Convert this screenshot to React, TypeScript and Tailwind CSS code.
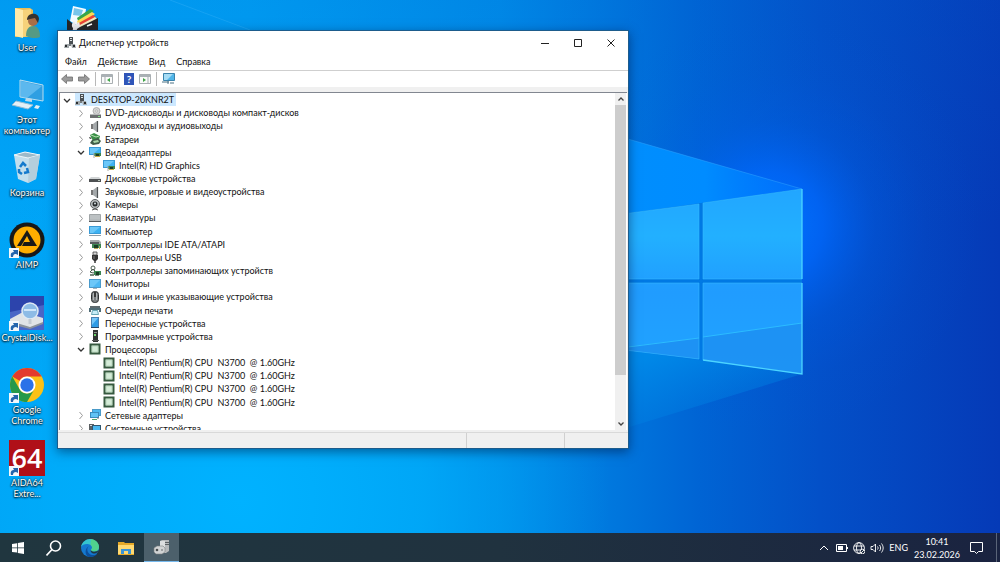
import { useState, type ReactNode } from 'react'

type Node = {
	label: string
	icon: string
	level: number
	open?: boolean
}

const nodes: Node[] = [
	{ label: 'DESKTOP-20KNR2T', icon: 'pc', level: 0, open: true },
	{ label: 'DVD-дисководы и дисководы компакт-дисков', icon: 'dvd', level: 1 },
	{ label: 'Аудиовходы и аудиовыходы', icon: 'audio', level: 1 },
	{ label: 'Батареи', icon: 'battery', level: 1 },
	{ label: 'Видеоадаптеры', icon: 'video', level: 1, open: true },
	{ label: 'Intel(R) HD Graphics', icon: 'video', level: 2 },
	{ label: 'Дисковые устройства', icon: 'disk', level: 1 },
	{ label: 'Звуковые, игровые и видеоустройства', icon: 'audio', level: 1 },
	{ label: 'Камеры', icon: 'camera', level: 1 },
	{ label: 'Клавиатуры', icon: 'keyboard', level: 1 },
	{ label: 'Компьютер', icon: 'computer', level: 1 },
	{ label: 'Контроллеры IDE ATA/ATAPI', icon: 'ide', level: 1 },
	{ label: 'Контроллеры USB', icon: 'usb', level: 1 },
	{ label: 'Контроллеры запоминающих устройств', icon: 'storage', level: 1 },
	{ label: 'Мониторы', icon: 'monitor', level: 1 },
	{ label: 'Мыши и иные указывающие устройства', icon: 'mouse', level: 1 },
	{ label: 'Очереди печати', icon: 'printer', level: 1 },
	{ label: 'Переносные устройства', icon: 'portable', level: 1 },
	{ label: 'Программные устройства', icon: 'software', level: 1 },
	{ label: 'Процессоры', icon: 'cpu', level: 1, open: true },
	{ label: 'Intel(R) Pentium(R) CPU  N3700  @ 1.60GHz', icon: 'cpu', level: 2 },
	{ label: 'Intel(R) Pentium(R) CPU  N3700  @ 1.60GHz', icon: 'cpu', level: 2 },
	{ label: 'Intel(R) Pentium(R) CPU  N3700  @ 1.60GHz', icon: 'cpu', level: 2 },
	{ label: 'Intel(R) Pentium(R) CPU  N3700  @ 1.60GHz', icon: 'cpu', level: 2 },
	{ label: 'Сетевые адаптеры', icon: 'network', level: 1 },
	{ label: 'Системные устройства', icon: 'system', level: 1 },
]

const indent = ['pl-[2px]', 'pl-[16px]', 'pl-[30px]']

const screen = (
	<>
		<rect x="0.5" y="1.5" width="11" height="7" fill="#3db2f2" stroke="#3a9ad5" />
		<path d="M1 2h10L4 8H1z" fill="#8bd6fb" opacity=".6" />
	</>
)

const glyphs: Record<string, ReactNode> = {
	pc: (
		<>
			<path d="M5 0h4v7H5z" fill="#4a4f53" />
			<path d="M6 1h2v1H6zM6 3h2v1H6z" fill="#dfe4e6" />
			<path d="M1 7h4v4H0zM7 7h4l1 4H8z" fill="#a4aaad" />
			<path d="M1 8h2v2H1zM9 8h2v2H9z" fill="#2b2e30" />
			<path d="M5 7h2v2H5z" fill="#777d80" />
		</>
	),
	dvd: (
		<>
			<circle cx="7.500" cy="4" r="3.500" fill="#d5d5d5" stroke="#9e9e9e" strokeWidth=".7" />
			<circle cx="7.500" cy="4" r="1" fill="#fff" stroke="#888" strokeWidth=".5" />
			<path d="M2 7h9l1 1v3H1V8z" fill="#6c6f70" />
			<path d="M2 7h9l1 1H1z" fill="#b8babb" />
			<path d="M9 9h2v1H9z" fill="#8ae28a" />
		</>
	),
	audio: (
		<>
			<path d="M2 4h2v5H2z" fill="#777" />
			<path d="M4 4l4-3v11L4 9z" fill="#a5a9ab" />
			<path d="M8.500 1v11" stroke="#4e5254" strokeWidth="1.200" />
		</>
	),
	battery: (
		<>
			<path d="M1 2l4-2 6 3-1 4-6 1z" fill="#3a8f47" />
			<path d="M2 2l5 2 3-1" stroke="#b6dfb1" fill="none" />
			<path d="M3 7l6-2 3 3-2 3-6 1-3-2z" fill="#405c48" />
			<path d="M4 8l5-1 1 2-5 1z" fill="#a8d4a6" />
			<path d="M0 4l3 1-2 1z" fill="#222" />
		</>
	),
	video: (
		<>
			{screen}
			<path d="M5 7h7v3H5z" fill="#3c8551" />
			<path d="M7 8h3v2H7z" fill="#1d3d2b" />
			<path d="M5 7v5" stroke="#aaa" />
			<path d="M6 10h5v1H6z" fill="#c9aa45" />
		</>
	),
	disk: (
		<>
			<path d="M2 5h8l2 2H0z" fill="#d2d5d6" />
			<path d="M0 7h12v3H0z" fill="#4d5052" />
			<path d="M9 8h2v1H9z" fill="#b8c6b9" />
		</>
	),
	camera: (
		<>
			<circle cx="6" cy="5" r="4.500" fill="#b9bdbf" stroke="#5d6062" />
			<circle cx="6" cy="5" r="2.500" fill="#292c2e" />
			<circle cx="6" cy="4.500" r="1" fill="#d5dde1" />
			<path d="M3 11l3-1 3 1" stroke="#555" fill="none" />
		</>
	),
	keyboard: (
		<>
			<path d="M0.500 2.500h11v7H.5z" fill="#b6bbbd" stroke="#a0a5a7" />
			<path d="M1 4h10M1 6h10" stroke="#ced2d3" strokeWidth=".6" />
			<path d="M0 9h12v1H0z" fill="#55595b" />
		</>
	),
	computer: (
		<>
			{screen}
			<path d="M0 10.500h12" stroke="#8e9da7" />
		</>
	),
	ide: (
		<>
			<path d="M1 2h9l2 2v2H1z" fill="#a5aaab" />
			<path d="M1 4h9v2H1z" fill="#565b5d" />
			<path d="M3 6h9v4H3z" fill="#3c8551" />
			<path d="M5 7h4v3H5z" fill="#183b24" />
			<path d="M10 8h1v3h-1zM5 10h4v1H5z" fill="#b7a75a" />
		</>
	),
	usb: (
		<>
			<path d="M4 1h4v3H4z" fill="#d6d6d6" stroke="#454545" strokeWidth=".8" />
			<path d="M3 4h6v4L7 10H5L3 8z" fill="#343434" />
			<path d="M6 10v2" stroke="#343434" strokeWidth="1.500" />
			<path d="M5 5v3" stroke="#999" strokeWidth=".7" />
		</>
	),
	storage: (
		<>
			<circle cx="4" cy="3" r="2" fill="none" stroke="#4c5c50" />
			<path d="M1 7l3-3 3 3-3 1z" fill="none" stroke="#4c5c50" />
			<path d="M5 6h7v4H5z" fill="#3c8551" />
			<path d="M7 7h3v3H7z" fill="#183b24" />
			<path d="M1 9h4v2H1zM6 10h4v1H6z" fill="#7b8a7e" />
		</>
	),
	monitor: (
		<>
			<rect x=".5" y="1.500" width="11" height="8" fill="#4cb8f4" stroke="#4a9acb" />
			<path d="M1 2h10L4 9H1z" fill="#8bd6fb" opacity=".5" />
			<path d="M4 10h4v1H4z" fill="#a5b2bb" />
		</>
	),
	mouse: (
		<>
			<rect x="2.500" y=".5" width="7" height="11" rx="3" fill="#7a7e80" stroke="#2e3133" />
			<path d="M6 1v5" stroke="#222" strokeWidth="1.500" />
			<path d="M4.500 2v7M7.500 2v7" stroke="#c0c4c6" strokeWidth=".8" />
		</>
	),
	printer: (
		<>
			<path d="M1 2h10v2H1z" fill="#5d696e" />
			<path d="M0 4h12v4h-2V6H2v2H0z" fill="#4f6c76" />
			<path d="M3.500 6.500h5l1 4h-7z" fill="#c7ecf6" stroke="#4a93a5" strokeWidth=".8" />
		</>
	),
	portable: (
		<>
			<rect x="2.500" y=".5" width="7" height="10" fill="#2e9be6" stroke="#4a80b0" />
			<path d="M3 1h6L3 8z" fill="#76c6f8" />
			<path d="M2 10h8v1H2z" fill="#27476a" />
		</>
	),
	software: (
		<>
			<path d="M4 0h5v12H4z" fill="#303331" />
			<path d="M5 2h3v1H5z" fill="#8b908c" />
			<path d="M5 4h2v2H5z" fill="#6fd36e" />
			<path d="M3 10h7v1H3z" fill="#555" />
		</>
	),
	cpu: (
		<>
			<rect x="1.500" y="1.500" width="9" height="9" fill="#d5ecd8" stroke="#36593f" strokeWidth="2" />
			<path d="M3 3h6v6H3z" fill="none" stroke="#9fc0a4" strokeWidth=".5" />
		</>
	),
	network: (
		<>
			<rect x="3.500" y=".5" width="8" height="6" fill="#4ab8f0" stroke="#4a9ac8" />
			<rect x="1.500" y="3.500" width="8" height="5" fill="#60c4f5" stroke="#3a8ebe" />
			<path d="M3 10h5v1H3z" fill="#58a868" />
			<path d="M9 8v2" stroke="#777" />
		</>
	),
	system: (
		<>
			<path d="M0 2h5v9H0z" fill="#5b6063" />
			<path d="M1 3h3v1H1z" fill="#ddd" />
			<rect x="3.500" y="3.500" width="8" height="6" fill="#4ab8f0" stroke="#31566d" />
		</>
	),
}

function DeviceIcon({ name }: { name: string }) {
	return (
		<svg viewBox="0 0 12 12" className="size-3 shrink-0" aria-hidden="true">
			{glyphs[name]}
		</svg>
	)
}

function Wallpaper() {
	return (
		<svg viewBox="0 0 1000 562" preserveAspectRatio="xMidYMid slice" className="absolute inset-0 size-full" aria-hidden="true">
			<defs>
				<linearGradient id="base" x1="0" y1="0" x2="1" y2="0">
					<stop offset="0" stopColor="#00a5f7" />
					<stop offset=".25" stopColor="#00a1f4" />
					<stop offset=".5" stopColor="#008de9" />
					<stop offset=".6" stopColor="#007adf" />
					<stop offset=".7" stopColor="#0064d4" />
					<stop offset=".82" stopColor="#0350c8" />
					<stop offset="1" stopColor="#053ab7" />
				</linearGradient>
				<linearGradient id="topShade" x1="0" y1="0" x2="0" y2="1">
					<stop offset="0" stopColor="#0060d0" stopOpacity=".15" />
					<stop offset=".4" stopColor="#0060d0" stopOpacity="0" />
				</linearGradient>
				<radialGradient id="floor" gradientUnits="userSpaceOnUse" cx="240" cy="500" r="370">
					<stop offset="0" stopColor="#00b2ff" />
					<stop offset=".5" stopColor="#00aefb" stopOpacity=".7" />
					<stop offset="1" stopColor="#00a0f0" stopOpacity="0" />
				</radialGradient>
				<radialGradient id="glow" gradientUnits="userSpaceOnUse" cx="770" cy="225" r="210">
					<stop offset="0" stopColor="#0074ff" />
					<stop offset=".25" stopColor="#0069ff" stopOpacity=".75" />
					<stop offset=".5" stopColor="#005eea" stopOpacity=".3" />
					<stop offset=".75" stopColor="#0058e0" stopOpacity=".08" />
					<stop offset="1" stopColor="#0058e0" stopOpacity="0" />
				</radialGradient>
				<linearGradient id="ray" gradientUnits="userSpaceOnUse" x1="560" y1="0" x2="802" y2="0">
					<stop offset="0" stopColor="#0090fc" />
					<stop offset=".6" stopColor="#008cff" />
					<stop offset="1" stopColor="#0074ff" stopOpacity=".6" />
				</linearGradient>
				<linearGradient id="lowRay" gradientUnits="userSpaceOnUse" x1="640" y1="360" x2="665" y2="430">
					<stop offset="0" stopColor="#0088e8" />
					<stop offset="1" stopColor="#007ce0" stopOpacity=".4" />
				</linearGradient>
				<linearGradient id="pane" gradientUnits="userSpaceOnUse" x1="0" y1="190" x2="0" y2="374">
					<stop offset="0" stopColor="#22a6ff" />
					<stop offset=".25" stopColor="#22b0ff" />
					<stop offset=".55" stopColor="#209cff" />
					<stop offset="1" stopColor="#20a4ff" />
				</linearGradient>
			</defs>
			<rect width="1000" height="562" fill="url(#base)" />
			<rect width="1000" height="562" fill="url(#topShade)" />
			<rect width="1000" height="562" fill="url(#floor)" />
			<path d="M170 0L250 30" stroke="#3bb4f8" strokeOpacity=".35" fill="none" />
			<rect x="560" y="15" width="440" height="430" fill="url(#glow)" />
			<path d="M600 340L802 374L600 436z" fill="url(#lowRay)" />
			<path d="M600 131L802 189V280H600z" fill="url(#ray)" />
			<path d="M600 131L802 189" stroke="#35a8ff" strokeOpacity=".45" />
			<path d="M600 217L802 189V374L600 347z" fill="#0079e4" />
			<path d="M600 217L699 204V279H600zM703 203L802 189V279H703zM600 283H699V359L600 347zM703 283H802V374L703 360z" fill="url(#pane)" />
			<path d="M600 350L699 338V359L600 347zM703 337L802 323V374L703 360z" fill="#1c8cf0" fillOpacity=".7" />
			<path d="M628 347L699 338M703 337L802 323" stroke="#2cbcff" />
			<path d="M600 217L699 204V279H600M600 283H699V359L600 347M703 279V203L802 189M703 279H802M703 360V283H802" fill="none" stroke="#38bcff" strokeOpacity=".7" strokeWidth=".8" />
			<path d="M802 189V279M802 283V374L703 360" fill="none" stroke="#4cd4ff" strokeWidth="1.300" />
		</svg>
	)
}

function Shortcut() {
	return (
		<svg viewBox="0 0 10 10" className="absolute bottom-0 left-0 size-[10px]" aria-hidden="true">
			<path d="M0 0h10v10H0z" fill="#f4f8fb" />
			<path d="M2 9c-1-4 1-5 3-5L4 2h5v5L7 6C5 6 4 7 4 9z" fill="#2465ad" />
		</svg>
	)
}

function DesktopIcon({ label, shortcut, children }: { label: string; shortcut?: boolean; children: ReactNode }) {
	return (
		<button className="flex w-[54px] flex-col items-center gap-[1px] text-[9px] leading-[11px] text-white [text-shadow:0_1px_2px_#000,0_0_2px_#000]">
			<span className="relative block size-9">
				{children}
				{shortcut && <Shortcut />}
			</span>
			<span className="min-h-[22px]">{label}</span>
		</button>
	)
}

function Picture({ children }: { children: ReactNode }) {
	return (
		<svg viewBox="0 0 36 36" className="size-9" aria-hidden="true">
			{children}
		</svg>
	)
}

function DesktopIcons() {
	return (
		<div className="absolute top-[5px] left-0 grid h-[507px] auto-rows-fr">
			<DesktopIcon label="User">
				<Picture>
					<path d="M6 3h15l3 2v26l-3 1H6z" fill="#e9bd55" />
					<path d="M6 3l8 2v28l-8-2z" fill="#ffe9a8" />
					<path d="M14 5l8-1v26l-8 2z" fill="#f6d27a" />
					<path d="M17 31c0-7 3-10 7-10s7 3 7 11c-4 2-10 1-14-1z" fill="#559a84" />
					<circle cx="24" cy="16" r="5" fill="#a86e47" />
					<path d="M18 15c0-8 12-8 12-1l-1 4-3-5-5 1z" fill="#37332f" />
				</Picture>
			</DesktopIcon>
			<DesktopIcon label="Этот компьютер">
				<Picture>
					<path d="M11 3l23 5v16l-23-4z" fill="#2f9fe2" stroke="#b9def1" />
					<path d="M12 4l21 5-15 12-6-1z" fill="#7bcaf6" opacity=".6" />
					<path d="M17 21l6 1v3l-7-1z" fill="#bcd8e8" />
					<path d="M7 24l17 4-5 4-16-4z" fill="#e3eff6" stroke="#94bdd5" />
					<path d="M27 28l4 1-2 3-4-1z" fill="#e4eff5" />
				</Picture>
			</DesktopIcon>
			<DesktopIcon label="Корзина">
				<Picture>
					<path d="M5 5l11-3 15 3-4 24-8 4-10-4z" fill="#d2e3ec" opacity=".92" />
					<path d="M5 5l14 3 12-3-15-3z" fill="#9cb9c9" stroke="#eef6fa" />
					<path d="M20 8l-1 25 8-4 4-24z" fill="#b4cedc" />
					<path d="M11 17l3-4 3 3M18 18l1 4-4 1M13 24l-3-2v-3" fill="none" stroke="#1479cc" strokeWidth="2.500" />
				</Picture>
			</DesktopIcon>
			<DesktopIcon label="AIMP" shortcut>
				<Picture>
					<circle cx="18" cy="18" r="17.500" fill="#181818" />
					<circle cx="18" cy="18" r="13.500" fill="#ffae00" />
					<path d="M18 8l10 16H13l2-4h6l-3-6-6 10H8z" fill="#181818" />
				</Picture>
			</DesktopIcon>
			<DesktopIcon label="CrystalDisk..." shortcut>
				<Picture>
					<path d="M1 1h34v34H1z" fill="#4a66c6" />
					<path d="M1 1h34v9L1 17z" fill="#2c44ac" />
					<path d="M1 24l13-7 20 6v5l-13 5L1 28z" fill="#e0e3e6" />
					<path d="M1 26l20 6 13-5v2l-13 5L1 29z" fill="#8b929c" />
					<circle cx="21" cy="16" r="8" fill="#8dbbe6" stroke="#dfe9f3" strokeWidth="1.500" />
					<path d="M15 15h12" stroke="#cfe6fa" strokeWidth="2" />
					<path d="M21 24v5" stroke="#c4cad2" strokeWidth="3" />
				</Picture>
			</DesktopIcon>
			<DesktopIcon label="Google Chrome" shortcut>
				<Picture>
					<circle cx="18" cy="18" r="17" fill="#fbc116" />
					<path d="M3.300 9.500A17 17 0 0 1 32.700 9.500H18a8.500 8.500 0 0 0-7.400 4.300z" fill="#e33b2e" />
					<path d="M3.300 9.500A17 17 0 0 0 18 35l7.400-12.800a8.500 8.500 0 0 1-14.800 0z" fill="#26994a" />
					<circle cx="18" cy="18" r="8.500" fill="#fff" />
					<circle cx="18" cy="18" r="6.700" fill="#2b72e8" />
				</Picture>
			</DesktopIcon>
			<DesktopIcon label="AIDA64 Extre..." shortcut>
				<span className="flex size-9 items-center justify-center bg-[#b01018] font-['Open_Sans',sans-serif] text-[27px] leading-none font-semibold [text-shadow:none]">
					64
				</span>
			</DesktopIcon>
		</div>
	)
}

function FolderIcon() {
	return (
		<svg viewBox="0 0 36 36" className="absolute top-[4px] left-[65px] size-9" aria-hidden="true">
			<path d="M8 2l13 3-3 20L5 17z" fill="#f4fbff" />
			<path d="M9 4l9 2-2 6-8-1z" fill="#78c5ea" />
			<path d="M12 14L25 5l4 2-15 12z" fill="#38a648" />
			<path d="M12 17L27 8l3 2-16 13z" fill="#ffda54" />
			<path d="M12 20L28 11l3 2-16 12z" fill="#e94335" />
			<path d="M13 22L30 13l2 2-17 11z" fill="#f4eac0" />
			<path d="M2 15l11 9 20-10v22H2z" fill="#262626" />
			<path d="M9 17l2 4 3-3c2 4 0 6-2 7l-2 9H7l1-10c-2-2-1-5 1-7z" fill="#eee" />
			<path d="M22 22l5-2" stroke="#fff" strokeWidth="1.500" />
		</svg>
	)
}

function Chevron({ open }: { open?: boolean }) {
	return (
		<svg viewBox="0 0 10 10" className="size-[10px]" fill="none" aria-hidden="true">
			{open ? <path d="M2 4l3 3 3-3" stroke="#333" strokeWidth="1.300" /> : <path d="M3.500 2l3 3.500-3 3.500" stroke="#9a9a9a" />}
		</svg>
	)
}

function Separator() {
	return <span className="h-[14px] w-px bg-[#b8b8b8]" />
}

function Arrow({ flip }: { flip?: boolean }) {
	return (
		<svg viewBox="0 0 12 10" className={flip ? 'h-[10px] w-3 rotate-180' : 'h-[10px] w-3'} aria-hidden="true">
			<path d="M.5 5L5.500 .5V3h6v4h-6v2.500z" fill="#9a9a9a" stroke="#6f6f6f" strokeWidth=".8" />
		</svg>
	)
}

function Panel({ flip }: { flip?: boolean }) {
	return (
		<svg viewBox="0 0 12 10" className="h-[10px] w-3" aria-hidden="true">
			<path d="M.5.5h11v9H.5z" fill="#fafafa" stroke="#a9afb2" />
			<path d="M1 1h10v2H1z" fill="#aab1b5" />
			<path d={flip ? 'M9 3v6' : 'M4 3v6'} stroke="#a5abaf" />
			<path d={flip ? 'M4 4l3 2-3 2z' : 'M9 4L6 6l3 2z'} fill="#41a548" />
		</svg>
	)
}

function Tree() {
	const [selected, setSelected] = useState(0)

	return (
		<div className="flex h-[338px] overflow-hidden border-t border-l border-[#828790] bg-white">
			<ul className="grid h-[342px] flex-1 auto-rows-fr">
				{nodes.map((node, i) => (
					<li key={i} className={`flex items-center ${indent[node.level]}`}>
						{node.level < 2 ? (
							<button aria-label={node.label} aria-expanded={!!node.open} className="mr-[3px]">
								<Chevron open={node.open} />
							</button>
						) : (
							<span className="mr-[3px] w-[10px]" />
						)}
						<button
							onClick={() => setSelected(i)}
							className={`flex items-center gap-1 whitespace-pre pr-[2px] leading-[13px] ${selected === i ? 'bg-[#cce8ff]' : ''}`}
						>
							<DeviceIcon name={node.icon} />
							{node.label}
						</button>
					</li>
				))}
			</ul>
			<div className="mr-[1px] flex w-[11px] flex-col bg-[#f0f0f0]">
				<button aria-label="Вверх" className="flex h-3 items-center justify-center">
					<svg viewBox="0 0 8 6" className="h-[6px] w-2" fill="none">
						<path d="M1.500 4.500L4 2l2.500 2.500" stroke="#444" strokeWidth="1.300" />
					</svg>
				</button>
				<div className="h-4/5 bg-[#cdcdcd]" />
				<button aria-label="Вниз" className="mt-auto flex h-3 items-center justify-center">
					<svg viewBox="0 0 8 6" className="h-[6px] w-2" fill="none">
						<path d="M1.500 1.500L4 4l2.500-2.500" stroke="#444" strokeWidth="1.300" />
					</svg>
				</button>
			</div>
		</div>
	)
}

function DeviceManager() {
	return (
		<main className="absolute top-[30px] left-[57px] w-[57.2%] border border-[#1d5c8c] bg-[#f0f0f0] text-[9px] text-[#111] shadow-[0_3px_10px_rgba(0,20,60,0.5)]">
			<header className="flex h-[23px] items-center gap-[3px] bg-white pr-[1px] pl-[6px]">
				<DeviceIcon name="pc" />
				<h1>Диспетчер устройств</h1>
				<div className="ml-auto flex h-full">
					<button aria-label="Свернуть" className="flex w-[33px] items-center justify-center">
						<svg viewBox="0 0 8 8" className="size-2">
							<path d="M0 4.500h8" stroke="#222" />
						</svg>
					</button>
					<button aria-label="Развернуть" className="flex w-[33px] items-center justify-center">
						<svg viewBox="0 0 8 8" className="size-2">
							<path d="M.5.5h7v7h-7z" fill="none" stroke="#222" />
						</svg>
					</button>
					<button aria-label="Закрыть" className="flex w-[33px] items-center justify-center">
						<svg viewBox="0 0 8 8" className="size-2">
							<path d="M.5.5l7 7M7.500.5l-7 7" stroke="#222" />
						</svg>
					</button>
				</div>
			</header>
			<nav className="flex h-4 items-center gap-[11px] bg-white pl-[7px]">
				<button>Файл</button>
				<button>Действие</button>
				<button>Вид</button>
				<button>Справка</button>
			</nav>
			<div className="flex h-[17px] items-center gap-[5px] border-t border-[#cfcfcf] bg-white pl-[3px]">
				<button aria-label="Назад"><Arrow /></button>
				<button aria-label="Вперед"><Arrow flip /></button>
				<Separator />
				<button aria-label="Дерево консоли"><Panel /></button>
				<Separator />
				<button aria-label="Справка" className="h-3 w-[10px] bg-[#2f55b8] text-[10px] leading-3 font-bold text-white">
					?
				</button>
				<button aria-label="Область действий"><Panel flip /></button>
				<Separator />
				<button aria-label="Обновить конфигурацию">
					<svg viewBox="0 0 13 12" className="h-3 w-[13px]" aria-hidden="true">
						<path d="M1.500.5h11v7h-11z" fill="#50b5e8" stroke="#3a83ac" />
						<path d="M2 1h9L5 7H2z" fill="#a6dcf5" />
						<path d="M0 9h7M6 8v3M8 10h4" stroke="#4b7183" />
					</svg>
				</button>
			</div>
			<div className="pt-[5px] pr-[1px] pl-[1px]">
				<Tree />
			</div>
			<footer className="mt-[2px] flex h-4 border-t border-[#d9d9d9]">
				<span className="flex-1" />
				<span className="w-[98px] border-l border-[#d0d0d0]" />
				<span className="w-[64px] border-l border-[#d0d0d0]" />
			</footer>
		</main>
	)
}

function Taskbar() {
	return (
		<footer className="absolute inset-x-0 bottom-0 flex h-[29px] items-stretch bg-linear-to-r from-[#20363f] via-[#20323f] to-[#1a2340] text-[9px] text-white">
			<button aria-label="Пуск" className="flex w-9 items-center justify-center">
				<svg viewBox="0 0 12 12" className="size-3" fill="#fff">
					<path d="M0 2l5-.8v4.300H0zM5.800 1L12 0v5.500H5.800zM0 6.300h5v4.300L0 10zM5.800 6.300H12V12l-6.200-1z" />
				</svg>
			</button>
			<button aria-label="Поиск" className="flex w-9 items-center justify-center">
				<svg viewBox="0 0 16 16" className="size-4" fill="none" stroke="#fff" strokeWidth="1.600">
					<circle cx="9.500" cy="6" r="5" />
					<path d="M6 9.500L.5 15.500" />
				</svg>
			</button>
			<button aria-label="Edge" className="flex w-9 items-center justify-center">
				<svg viewBox="0 0 18 18" className="size-[18px]">
					<circle cx="9" cy="9" r="9" fill="#1479cf" />
					<path d="M0 8C1 3 5 0 9 0c5 0 9 4 9 8 0 3-2 4.500-5 4.500-2 0-3-.7-3-1.500s1-1 1-2.500C11 6 8 5 6 5 3 5 1 6 0 8z" fill="#35c5ce" />
					<path d="M10 0c5 .5 8 4 8 8 0 3-2 4.500-5 4.500-2 0-3-.7-3-1.500s1-1 1-2.500c0-1-.5-2-1.500-2.500z" fill="#5fd76b" opacity=".65" />
					<path d="M8 7c-3 2-2 8 3 9 2 .4 4-.4 5.500-1.500C14 18 10 18 8 18c-4-1-5-8 0-11z" fill="#0c4f9c" />
					<path d="M10 11c0 1 1.500 1.700 3 1.700 2 0 3.500-.7 4.500-1.700-.5 2-2 3.500-4 3.500-3 0-4.500-2-3.500-3.500z" fill="#20363f" />
				</svg>
			</button>
			<button aria-label="Проводник" className="flex w-9 items-center justify-center">
				<svg viewBox="0 0 16 14" className="h-[14px] w-4">
					<path d="M0 1h6l1 1h9v12H0z" fill="#e5a928" />
					<path d="M0 4h16v9H0z" fill="#ffda72" />
					<path d="M3 13V8h10v5h-3v-3H6v3z" fill="#3994d6" />
				</svg>
			</button>
			<button aria-label="Диспетчер устройств" className="flex w-[35px] items-center justify-center border-b border-[#76b9ed] bg-[#4c606b]">
				<svg viewBox="0 0 18 16" className="h-4 w-[18px]">
					<path d="M7 2l2-1h7v11l-3 2H7z" fill="#b5b8ba" />
					<path d="M7 2h5v11H7z" fill="#dcdedf" />
					<path d="M12 3h4v1h-4zM12 5h4v1h-4z" fill="#5c6063" />
					<path d="M1 9l3-2h6l2 2v4l-3 2H3l-2-2z" fill="#d1d3d4" stroke="#7c8082" strokeWidth=".6" />
					<circle cx="4" cy="11" r="1.300" fill="#4a4e50" />
					<circle cx="9" cy="11" r="1" fill="#8a8e90" />
				</svg>
			</button>
			<div className="ml-auto flex items-center">
				<button aria-label="Скрытые значки" className="mr-[7px]">
					<svg viewBox="0 0 10 6" className="h-[6px] w-[10px]" fill="none" stroke="#fff">
						<path d="M1 5l4-4 4 4" />
					</svg>
				</button>
				<svg viewBox="0 0 12 8" className="mr-[5px] h-2 w-3" aria-hidden="true">
					<path d="M.5.5h10v7H.5z" fill="none" stroke="#fff" />
					<path d="M2 2h5v4H2zM11 3h1v2h-1z" fill="#fff" />
				</svg>
				<svg viewBox="0 0 12 12" className="mr-[5px] size-3" fill="none" stroke="#fff" strokeWidth=".9" aria-hidden="true">
					<circle cx="6" cy="6" r="5.400" />
					<ellipse cx="6" cy="6" rx="2.500" ry="5.400" />
					<path d="M1 4h10M1 8h10" />
					<circle cx="9.500" cy="9.500" r="2.300" fill="#1b2940" />
					<path d="M8 11l3-3" />
				</svg>
				<svg viewBox="0 0 14 12" className="mr-[5px] h-3 w-[14px]" fill="none" stroke="#fff" strokeWidth=".9" aria-hidden="true">
					<path d="M1 4.500h2l2.500-2.500v8L3 7.500H1zM7.500 4.500c.8 1 .8 2 0 3M9.500 3c1.500 2 1.500 4 0 6M11.500 1.500c2.200 3 2.200 6 0 9" />
				</svg>
				<button className="mr-[6px]">ENG</button>
				<time className="mr-[10px] text-center leading-[13px]">
					10:41
					<br />
					23.02.2026
				</time>
				<button aria-label="Уведомления" className="mr-[13px]">
					<svg viewBox="0 0 13 12" className="h-3 w-[13px]" fill="none" stroke="#fff">
						<path d="M.5.5h12v9h-4l-2 2-2-2h-4z" />
					</svg>
				</button>
				<span className="mr-[3px] h-[29px] w-px bg-[#5a6478]" />
			</div>
		</footer>
	)
}

export default function App() {
	return (
		<div className="relative h-screen overflow-hidden bg-[#0078d7] font-['Lato','Open_Sans',sans-serif]">
			<Wallpaper />
			<DesktopIcons />
			<FolderIcon />
			<DeviceManager />
			<Taskbar />
		</div>
	)
}
